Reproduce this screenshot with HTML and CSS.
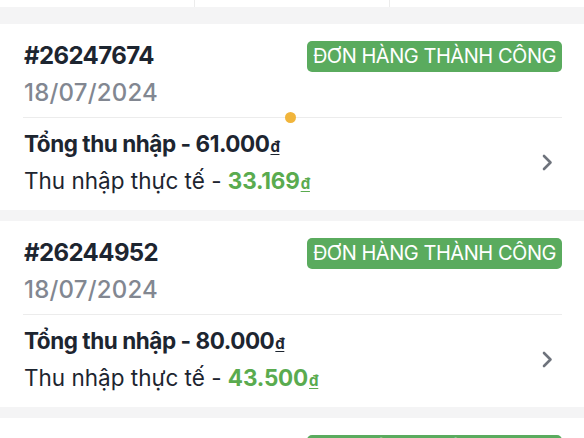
FILE: index.html
```html
<!DOCTYPE html>
<html lang="vi">
<head>
<meta charset="utf-8">
<link rel="stylesheet" href="styles.css">
</head>
<body>
<div class="tabs">
  <div class="tab"></div>
  <div class="tab"></div>
  <div class="tab"></div>
</div>
<div class="list">
  <div class="card">
    <div class="head">
      <div class="ids">
        <div class="id">#26247674</div>
        <div class="date">18/07/2024</div>
      </div>
      <div class="badge">ĐƠN HÀNG THÀNH CÔNG</div>
    </div>
    <div class="divider"></div>
    <span class="dot"></span>
    <div class="body">
      <div class="lines">
        <div class="total">Tổng thu nhập - 61.000<span class="cur">đ</span></div>
        <div class="real">Thu nhập thực tế - <span class="amt">33.169<span class="cur">đ</span></span></div>
      </div>
      <svg class="chev" width="12" height="17" viewBox="0 0 12 17"><path d="M3 2 L9.5 8.5 L3 15" fill="none" stroke="#6e737c" stroke-width="2.6" stroke-linecap="round" stroke-linejoin="round"/></svg>
    </div>
  </div>
  <div class="card">
    <div class="head">
      <div class="ids">
        <div class="id">#26244952</div>
        <div class="date">18/07/2024</div>
      </div>
      <div class="badge">ĐƠN HÀNG THÀNH CÔNG</div>
    </div>
    <div class="divider"></div>
    <div class="body">
      <div class="lines">
        <div class="total">Tổng thu nhập - 80.000<span class="cur">đ</span></div>
        <div class="real">Thu nhập thực tế - <span class="amt">43.500<span class="cur">đ</span></span></div>
      </div>
      <svg class="chev" width="12" height="17" viewBox="0 0 12 17"><path d="M3 2 L9.5 8.5 L3 15" fill="none" stroke="#6e737c" stroke-width="2.6" stroke-linecap="round" stroke-linejoin="round"/></svg>
    </div>
  </div>
  <div class="card">
    <div class="head">
      <div class="ids">
        <div class="id">#26244001</div>
        <div class="date">18/07/2024</div>
      </div>
      <div class="badge">ĐƠN HÀNG THÀNH CÔNG</div>
    </div>
  </div>
</div>
</body>
</html>
```
FILE: styles.css
```css
* { box-sizing: border-box; }
html, body { margin: 0; padding: 0; }
body {
  background: #f4f4f5;
  font-family: Inter, "Noto Sans", sans-serif;
  color: #1d2530;
  overflow: hidden;
  height: 438px;
}
.tabs {
  display: flex;
  height: 7px;
  background: #fff;
}
.tab {
  flex: 1;
  border-right: 1px solid #ececec;
}
.tab:last-child { border-right: none; }
.list {
  display: flex;
  flex-direction: column;
  gap: 11px;
  padding-top: 17px;
}
.card {
  position: relative;
  background: #fff;
  padding: 13px 23px 11px 24px;
}
.head {
  display: flex;
  justify-content: space-between;
  align-items: flex-start;
}
.id {
  font-size: 24px;
  font-weight: 700;
  line-height: 37px;
  letter-spacing: -0.6px;
}
.date {
  font-size: 24px;
  font-weight: 500;
  line-height: 37px;
  color: #828791;
  letter-spacing: 0.2px;
}
.badge {
  margin-top: 4px;
  margin-right: -1px;
  background: #5aab5e;
  color: #fff;
  font-size: 20px;
  line-height: 31px;
  height: 31px;
  padding: 0 6px;
  border-radius: 5px;
  white-space: nowrap;
  letter-spacing: -0.45px;
}
.divider {
  margin: 6px -1px 0 -1px;
  height: 1px;
  background: #ececec;
}
.dot {
  position: absolute;
  left: 285px;
  top: 88px;
  width: 11px;
  height: 11px;
  border-radius: 50%;
  background: #f1b53b;
}
.body {
  display: flex;
  align-items: center;
  justify-content: space-between;
  margin-top: 7px;
}
.total {
  font-size: 22.5px;
  font-weight: 700;
  line-height: 37px;
  height: 37px;
  letter-spacing: -0.45px;
}
.real {
  font-size: 22.5px;
  font-weight: 400;
  line-height: 37px;
  height: 37px;
}
.amt {
  color: #5aab4f;
  font-weight: 700;
  letter-spacing: -0.2px;
}
.cur {
  font-size: 15px;
  line-height: 0;
  text-decoration: underline;
  text-underline-offset: 2px;
  margin-left: 1px;
}
.chev {
  margin-right: 8px;
}
```
